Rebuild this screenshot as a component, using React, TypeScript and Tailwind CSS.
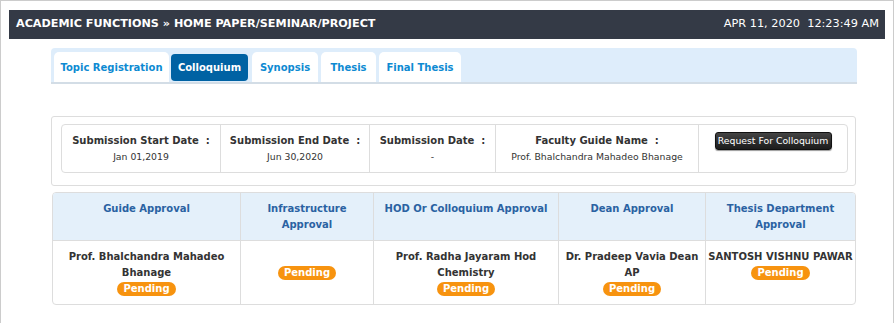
const tabs = [
  { name: "Topic Registration", w: "w-[115px]", ml: "ml-0" },
  { name: "Colloquium", w: "w-[77px]", ml: "ml-[2px]" },
  { name: "Synopsis", w: "w-[66px]", ml: "ml-[4px]" },
  { name: "Thesis", w: "w-[55px]", ml: "ml-[3px]" },
  { name: "Final Thesis", w: "w-[82px]", ml: "ml-[3px]" },
];

const info = [
  { label: "Submission Start Date  :", value: "Jan 01,2019" },
  { label: "Submission End Date  :", value: "Jun 30,2020" },
  { label: "Submission Date  :", value: "-" },
  { label: "Faculty Guide Name  :", value: "Prof. Bhalchandra Mahadeo Bhanage" },
];

function Pending() {
  return (
    <span className="inline-block rounded-full bg-[#f7930f] px-[6px] text-[10px] leading-[14px] font-bold text-white">
      Pending
    </span>
  );
}

export default function App() {
  return (
    <div
      className="w-[894px] h-[323px] overflow-hidden border border-b-0 border-[#cccccc] bg-white text-[10px] text-[#333]"
      style={{ fontFamily: '"DejaVu Sans", sans-serif' }}
    >
      <div className="mx-[8px] mt-[9px] h-[29px] bg-[#343a46] flex items-center justify-between pl-[7px] pr-[6px] text-white">
        <span className="font-bold text-[11.2px]">ACADEMIC FUNCTIONS » HOME PAPER/SEMINAR/PROJECT</span>
        <span className="text-[11.3px]">APR 11, 2020&nbsp;&nbsp;12:23:49 AM</span>
      </div>

      <div className="ml-[50px] w-[806px] mt-[9px] h-[36px] bg-[#deedfb] rounded-t-[4px] border-b-2 border-[#d3dde6] flex items-end pl-[3px]">
        {tabs.map((t) =>
          t.name === "Colloquium" ? (
            <div key={t.name} className={`${t.w} ${t.ml} h-[27px] mb-[1px] flex items-center justify-center rounded-[4px] bg-[#0062a3] text-white font-bold`}>
              {t.name}
            </div>
          ) : (
            <div key={t.name} className={`${t.w} ${t.ml} h-[30px] flex items-center justify-center rounded-t-[5px] bg-white text-[#0d8ad2] font-bold`}>
              {t.name}
            </div>
          )
        )}
      </div>

      <div className="ml-[50px] w-[805px] mt-[32px] h-[70px] border border-[#dddddd] rounded-[3px] pt-[7px] pl-[9px]">
        <div className="w-[787px] h-[49px] border border-[#dddddd] rounded-[4px] grid grid-cols-[159px_149px_126px_203px_148px]">
          {info.map((c, i) => (
            <div key={i} className="border-r border-[#dddddd] text-center pt-[8px] leading-[16px] whitespace-pre">
              <div className="font-bold">{c.label}</div>
              <div className="text-[9.3px]">{c.value}</div>
            </div>
          ))}
          <div className="flex justify-center pt-[7px]">
            <button className="h-[18px] w-[117px] whitespace-nowrap rounded-[3px] bg-gradient-to-b from-[#444] to-[#1c1c1c] border border-[#111] text-white text-[9.3px] leading-[16px] shadow-[0_1px_1px_rgba(0,0,0,0.4)]">
              Request For Colloquium
            </button>
          </div>
        </div>
      </div>

      <div className="ml-[51px] w-[804px] mt-[6px] border border-[#dddddd] rounded-[4px] overflow-hidden">
        <div className="grid grid-cols-[188px_133px_185px_147px_149px] bg-[#e4f0fa] h-[48px] border-b border-[#dddddd] text-[#2a62a2] font-bold leading-[16px] text-center">
          <div className="border-r border-[#dddddd] pt-[8px]">Guide Approval</div>
          <div className="border-r border-[#dddddd] pt-[8px]">Infrastructure<br />Approval</div>
          <div className="border-r border-[#dddddd] pt-[8px]">HOD Or Colloquium Approval</div>
          <div className="border-r border-[#dddddd] pt-[8px]">Dean Approval</div>
          <div className="pt-[8px] px-[8px]">Thesis Department Approval</div>
        </div>
        <div className="grid grid-cols-[188px_133px_185px_147px_149px] h-[63px] font-bold leading-[16px] text-center text-[#333]">
          <div className="border-r border-[#dddddd] pt-[8px] px-[10px]">
            Prof. Bhalchandra Mahadeo Bhanage
            <div><Pending /></div>
          </div>
          <div className="border-r border-[#dddddd] pt-[24px]">
            <Pending />
          </div>
          <div className="border-r border-[#dddddd] pt-[8px] px-[16px]">
            Prof. Radha Jayaram Hod Chemistry
            <div><Pending /></div>
          </div>
          <div className="border-r border-[#dddddd] pt-[8px] px-[6px]">
            Dr. Pradeep Vavia Dean AP
            <div><Pending /></div>
          </div>
          <div className="pt-[8px] whitespace-nowrap">
            SANTOSH VISHNU PAWAR
            <div><Pending /></div>
          </div>
        </div>
      </div>
    </div>
  );
}
